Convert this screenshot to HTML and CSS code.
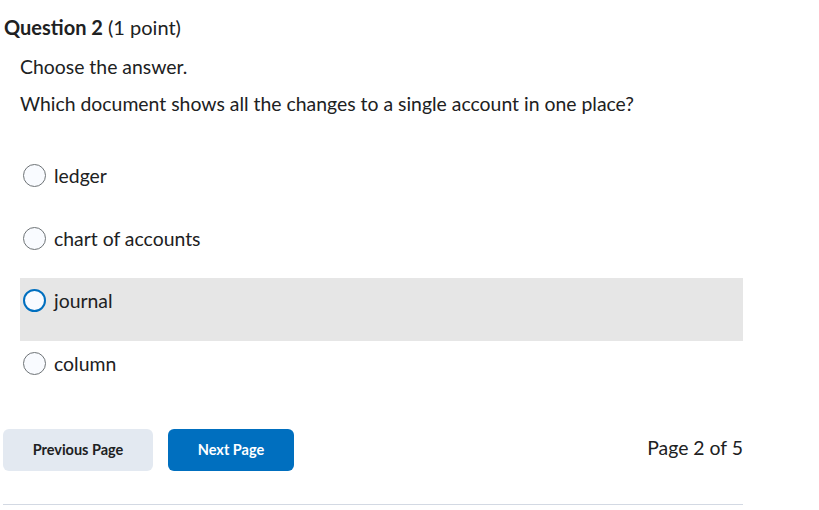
FILE: index.html
```html
<!DOCTYPE html>
<html lang="en">
<head>
<meta charset="utf-8">
<title>Question 2</title>
<link rel="stylesheet" href="styles.css">
</head>
<body>
<main class="quiz">
  <section class="question">
    <h2 class="q-title"><strong>Question 2</strong> (1 point)</h2>
    <div class="q-body">
      <p class="instr">Choose the answer.</p>
      <p class="prompt">Which document shows all the changes to a single account in one place?</p>
      <ul class="choices">
        <li class="choice"><span class="radio"></span><span class="label">ledger</span></li>
        <li class="choice"><span class="radio"></span><span class="label">chart of accounts</span></li>
        <li class="choice is-hover"><span class="radio is-focus"></span><span class="label">journal</span></li>
        <li class="choice"><span class="radio"></span><span class="label">column</span></li>
      </ul>
    </div>
  </section>
  <nav class="pager">
    <button class="btn btn-secondary" type="button">Previous Page</button>
    <button class="btn btn-primary" type="button">Next Page</button>
    <span class="page-count">Page 2 of 5</span>
  </nav>
  <hr class="divider">
</main>
</body>
</html>
```
FILE: styles.css
```css
* { box-sizing: border-box; }
html, body { margin: 0; padding: 0; background: #fff; }
body {
  font-family: Lato, "Noto Sans", sans-serif;
  color: #202122;
  width: 819px;
  height: 510px;
  overflow: hidden;
}
.quiz {
  width: 740px;
  margin-left: 3px;
}
.q-title {
  margin: 0;
  padding-top: 15px;
  padding-left: 1px;
  font-size: 20px;
  line-height: 24px;
  font-weight: 400;
}
.q-title strong { font-weight: 700; }
.q-body { padding-left: 17px; }
.instr {
  margin: 16px 0 0;
  font-size: 19.4px;
  line-height: 24px;
}
.prompt {
  margin: 13px 0 0;
  font-size: 19.4px;
  line-height: 24px;
}
.choices {
  list-style: none;
  margin: 37px 0 0;
  padding: 0;
}
.choice {
  height: 62.5px;
  display: flex;
  align-items: flex-start;
  padding-top: 11px;
  padding-left: 3px;
  gap: 8px;
}
.choice.is-hover { background: #e6e6e6; }
.radio {
  width: 23px;
  height: 23px;
  border-radius: 50%;
  border: 1px solid #6e7376;
  background: #f9fbff;
  flex: none;
}
.radio.is-focus {
  border: 2px solid #006fbf;
}
.label {
  font-size: 19.4px;
  line-height: 23px;
}
.pager {
  display: flex;
  align-items: center;
  margin-top: 26px;
  gap: 15px;
}
.btn {
  height: 42px;
  border: none;
  border-radius: 6px;
  padding: 0 0 2px;
  font-family: Lato, "Noto Sans", sans-serif;
  font-size: 14.5px;
  font-weight: 700;
  cursor: pointer;
}
.btn-secondary {
  width: 150px;
  background: #e3e9f1;
  color: #202122;
}
.btn-primary {
  width: 126px;
  background: #006fbf;
  color: #fff;
}
.page-count {
  margin-left: auto;
  margin-bottom: 5px;
  font-size: 19.4px;
  line-height: 24px;
}
.divider {
  margin: 33px 0 0;
  border: none;
  border-top: 1px solid #d3d9e3;
}
```
